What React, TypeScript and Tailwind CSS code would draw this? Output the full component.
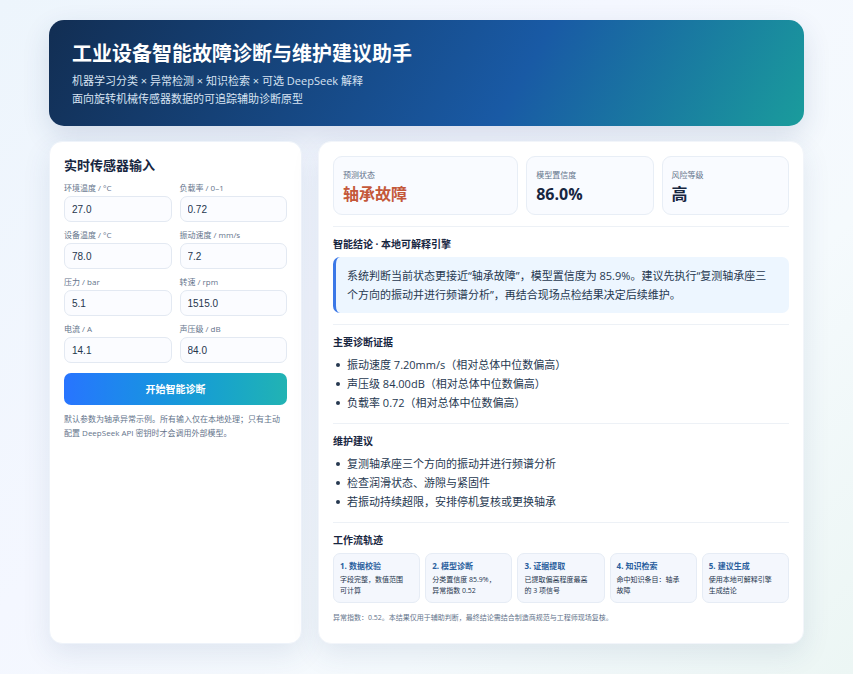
import React from 'react';

const fields = [
  { id: 'ambient', label: '环境温度 / °C', value: '27.0' },
  { id: 'load', label: '负载率 / 0–1', value: '0.72' },
  { id: 'device', label: '设备温度 / °C', value: '78.0' },
  { id: 'vibration', label: '振动速度 / mm/s', value: '7.2' },
  { id: 'pressure', label: '压力 / bar', value: '5.1' },
  { id: 'speed', label: '转速 / rpm', value: '1515.0' },
  { id: 'current', label: '电流 / A', value: '14.1' },
  { id: 'sound', label: '声压级 / dB', value: '84.0' },
];

const metrics = [
  { label: '预测状态', value: '轴承故障', color: 'text-[#c4583a]' },
  { label: '模型置信度', value: '86.0%', color: 'text-[#17263f]' },
  { label: '风险等级', value: '高', color: 'text-[#17263f]' },
];

const evidence = [
  '振动速度 7.20mm/s（相对总体中位数偏高）',
  '声压级 84.00dB（相对总体中位数偏高）',
  '负载率 0.72（相对总体中位数偏高）',
];

const advice = [
  '复测轴承座三个方向的振动并进行频谱分析',
  '检查润滑状态、游隙与紧固件',
  '若振动持续超限，安排停机复核或更换轴承',
];

const steps = [
  { title: '1. 数据校验', text: '字段完整，数值范围可计算' },
  { title: '2. 模型诊断', text: '分类置信度 85.9%，异常指数 0.52' },
  { title: '3. 证据提取', text: '已提取偏高程度最高的 3 项信号' },
  { title: '4. 知识检索', text: '命中知识条目：轴承故障' },
  { title: '5. 建议生成', text: '使用本地可解释引擎生成结论' },
];

const Section: React.FC<{ title: string; children: React.ReactNode }> = ({ title, children }) => (
  <section className="mt-[11px] border-t border-[#edf1f6] pt-[10px]">
    <h3 className="text-[10px] leading-[14px] font-bold">{title}</h3>
    {children}
  </section>
);

const BulletList: React.FC<{ items: string[] }> = ({ items }) => (
  <ul className="mt-[6px] pl-[3px] text-[11px] leading-[19px] text-[#263850]">
    {items.map((item) => (
      <li
        key={item}
        className="flex items-center gap-[7px] before:size-1 before:shrink-0 before:rounded-full before:bg-[#263850]"
      >
        {item}
      </li>
    ))}
  </ul>
);

const App: React.FC = () => {
  return (
    <div lang="zh-CN" className="bg-white pr-[7px] font-['Open_Sans','Noto_Sans_CJK_SC',sans-serif] text-[#17263f]">
      <div className="bg-[linear-gradient(135deg,#edf5fc_0%,#f4f7ff_40%,#f5fafd_70%,#ecf6f4_100%)] px-[49px] pt-5 pb-[30px]">
        <header className="rounded-[15px] bg-[linear-gradient(120deg,#122e53_0%,#195aa5_62%,#1a9c9c_100%)] px-[23px] pt-5 pb-[18px] text-white shadow-[0_10px_28px_rgba(35,65,115,0.14)]">
          <h1 className="text-[20px] leading-[28px] font-bold">工业设备智能故障诊断与维护建议助手</h1>
          <p className="mt-1 text-[11px] leading-[18px] text-[#d7e3f2]">
            机器学习分类 × 异常检测 × 知识检索 × 可选 DeepSeek 解释
            <br />
            面向旋转机械传感器数据的可追踪辅助诊断原型
          </p>
        </header>

        <main className="mt-[15px] grid grid-cols-[253fr_486fr] gap-4">
          <section className="rounded-[13px] border border-[#eef3fa] bg-white px-[14px] pt-[14px] pb-4 shadow-[0_10px_28px_rgba(35,65,115,0.1)]">
            <h2 className="text-[13px] leading-[18px] font-bold">实时传感器输入</h2>
            <form onSubmit={(e) => e.preventDefault()}>
              <div className="mt-2 grid grid-cols-2 gap-x-2 gap-y-[7px]">
                {fields.map((f) => (
                  <div key={f.id}>
                    <label htmlFor={f.id} className="block text-[8px] leading-[12px] text-[#64748b]">
                      {f.label}
                    </label>
                    <input
                      id={f.id}
                      type="text"
                      defaultValue={f.value}
                      className="mt-[2px] block h-[26px] w-full rounded-[7px] border border-[#e3e9f2] bg-[#fbfcff] px-[7px] font-['Liberation_Sans',sans-serif] text-[10px] text-[#26364d]"
                    />
                  </div>
                ))}
              </div>
              <button
                type="submit"
                className="mt-[10px] block h-8 w-full rounded-[7px] bg-linear-to-r from-[#2874ff] to-[#22b3b3] text-[10px] font-bold text-white"
              >
                开始智能诊断
              </button>
            </form>
            <p className="mt-[7px] text-[8px] leading-[14px] text-[#64748b]">
              默认参数为轴承异常示例。所有输入仅在本地处理；只有主动配置 DeepSeek API 密钥时才会调用外部模型。
            </p>
          </section>

          <section className="rounded-[13px] border border-[#f2f5fa] bg-white px-[14px] pt-[14px] pb-[18px] shadow-[0_10px_28px_rgba(35,65,115,0.1)]">
            <div className="grid grid-cols-[186fr_128fr_128fr] gap-2">
              {metrics.map((m) => (
                <div key={m.label} className="rounded-[9px] border border-[#e8eef6] bg-[#f9fbff] px-[9px] pt-3 pb-[9px]">
                  <p className="text-[8px] leading-[12px] text-[#64748b]">{m.label}</p>
                  <p className={`mt-[2px] text-[16px] leading-[22px] font-bold ${m.color}`}>{m.value}</p>
                </div>
              ))}
            </div>

            <Section title="智能结论 · 本地可解释引擎">
              <p className="mt-[6px] rounded-[7px] border-l-[3px] border-[#3b78e7] bg-[#edf6ff] py-[9px] pr-4 pl-[11px] text-[11px] leading-[19px] text-[#263850]">
                系统判断当前状态更接近“轴承故障”，模型置信度为 85.9%。建议先执行“复测轴承座三个方向的振动并进行频谱分析”，再结合现场点检结果决定后续维护。
              </p>
            </Section>

            <Section title="主要诊断证据">
              <BulletList items={evidence} />
            </Section>

            <Section title="维护建议">
              <BulletList items={advice} />
            </Section>

            <Section title="工作流轨迹">
              <ol className="mt-[6px] grid grid-cols-5 gap-[5px]">
                {steps.map((s) => (
                  <li key={s.title} className="rounded-[7px] border border-[#e6ecf5] bg-[#f4f7fd] py-[6px] pr-[12px] pl-[6px]">
                    <h4 className="text-[8px] leading-[12px] font-bold text-[#2a5f9e]">{s.title}</h4>
                    <p className="mt-[2px] text-[7px] leading-[11px] text-[#26364d]">{s.text}</p>
                  </li>
                ))}
              </ol>
              <p className="mt-2 text-[7px] leading-[14px] text-[#64748b]">
                异常指数：0.52。本结果仅用于辅助判断，最终结论需结合制造商规范与工程师现场复核。
              </p>
            </Section>
          </section>
        </main>
      </div>
    </div>
  );
};

export default App;
